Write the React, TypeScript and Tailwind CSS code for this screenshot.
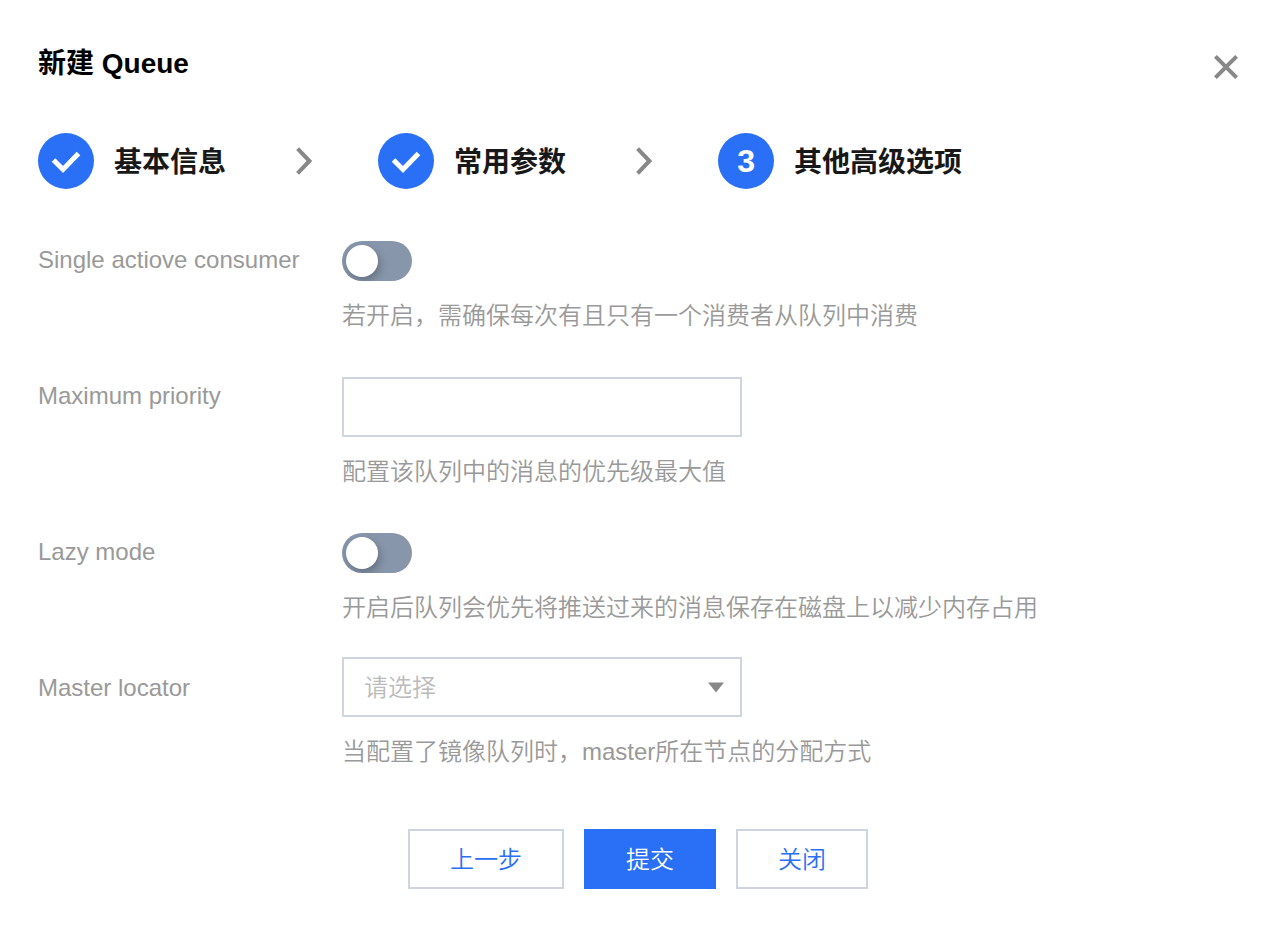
import type { ReactNode } from "react";

const steps = ["基本信息", "常用参数", "其他高级选项"];
const currentStep = 2;

const App = () => {
  return (
    <main className="pt-11 pb-12 pl-[38px] pr-11 bg-white font-['Liberation_Sans','Noto_Sans_CJK_SC',sans-serif] text-2xl text-[#999]">
      <header className="flex items-start justify-between">
        <h1 className="text-[28px] leading-10 font-bold text-black">
          新建 Queue
        </h1>
        <button type="button" aria-label="Close" className="mt-[11px]">
          <svg
            className="size-6"
            viewBox="0 0 24 24"
            stroke="#888"
            strokeWidth="4"
          >
            <path d="M1.4 1.4 22.6 22.6M22.6 1.4 1.4 22.6" />
          </svg>
        </button>
      </header>

      <ol className="flex items-center mt-[49px] mb-[52px]">
        {steps.map((title, index) => (
          <Step
            key={title}
            index={index}
            title={title}
            last={index === steps.length - 1}
          />
        ))}
      </ol>

      <form onSubmit={(e) => e.preventDefault()}>
        <div className="mb-[42px]">
          <Field
            id="single-active"
            label="Single actiove consumer"
            help="若开启，需确保每次有且只有一个消费者从队列中消费"
          >
            <Switch id="single-active" />
          </Field>
        </div>

        <div className="mb-[42px]">
          <Field
            id="max-priority"
            label="Maximum priority"
            help="配置该队列中的消息的优先级最大值"
          >
            <input
              id="max-priority"
              type="text"
              className="block w-[400px] h-[60px] px-5 border-2 border-[#cfd5de] text-black outline-none"
            />
          </Field>
        </div>

        <div className="mb-[30px]">
          <Field
            id="lazy-mode"
            label="Lazy mode"
            help="开启后队列会优先将推送过来的消息保存在磁盘上以减少内存占用"
          >
            <Switch id="lazy-mode" />
          </Field>
        </div>

        <Field
          id="master-locator"
          label="Master locator"
          labelClassName="pt-3"
          help="当配置了镜像队列时，master所在节点的分配方式"
        >
          <div className="relative w-[400px]">
            <select
              id="master-locator"
              defaultValue=""
              className="block appearance-none w-full h-[60px] px-5 pt-0.5 border-2 border-[#cfd5de] bg-white font-[350] text-[#bbb] outline-none"
            >
              <option value="">请选择</option>
              <option value="min-masters">min-masters</option>
              <option value="client-local">client-local</option>
              <option value="random">random</option>
            </select>
            <svg
              className="absolute right-[18px] top-[25px] w-4 h-[11px] pointer-events-none"
              viewBox="0 0 16 11"
              fill="#888"
            >
              <path d="M0 .5h16L8 10.5z" />
            </svg>
          </div>
        </Field>

        <div className="flex justify-center gap-5 mt-[58px]">
          <button
            type="button"
            className="h-[60px] px-10 pt-0.5 border-2 border-[#cfd5de] font-[350] text-[#2970f6]"
          >
            上一步
          </button>
          <button
            type="submit"
            className="h-[60px] px-10 pt-0.5 border-2 border-[#2970f6] bg-[#2970f6] font-[350] text-white"
          >
            提交
          </button>
          <button
            type="button"
            className="h-[60px] px-10 pt-0.5 border-2 border-[#cfd5de] font-[350] text-[#2970f6]"
          >
            关闭
          </button>
        </div>
      </form>
    </main>
  );
};

type StepProps = { index: number; title: string; last: boolean };

const Step = ({ index, title, last }: StepProps) => (
  <li className="flex items-center text-[28px] leading-10 font-bold">
    <span className="flex items-center justify-center size-14 mr-5 rounded-full bg-[#2970f6] text-[32px] text-white">
      {index < currentStep ? (
        <svg
          className="size-8"
          viewBox="0 0 32 32"
          fill="none"
          stroke="#fff"
          strokeWidth="5"
        >
          <path d="M3.5 15 13 24.5 28.5 8.5" />
        </svg>
      ) : (
        index + 1
      )}
    </span>
    <span className="pt-1 text-[#181818]">{title}</span>
    {!last && (
      <svg
        className="w-4 h-7 ml-[70px] mr-[66px]"
        viewBox="0 0 16 28"
        fill="none"
        stroke="#888"
        strokeWidth="4"
      >
        <path d="M1.6 1.6 13.4 14 1.6 26.4" />
      </svg>
    )}
  </li>
);

type FieldProps = {
  id: string;
  label: string;
  help: string;
  labelClassName?: string;
  children: ReactNode;
};

const Field = ({ id, label, help, labelClassName, children }: FieldProps) => (
  <div className="flex items-start">
    <div className={`w-[304px] shrink-0 leading-[38px] ${labelClassName || ""}`}>
      <label htmlFor={id}>{label}</label>
    </div>
    <div className="flex-1">
      {children}
      <p className="mt-4 leading-[38px] font-[350]">{help}</p>
    </div>
  </div>
);

const Switch = ({ id }: { id: string }) => (
  <input
    id={id}
    type="checkbox"
    role="switch"
    className="block appearance-none w-[70px] h-10 p-1 rounded-full overflow-hidden bg-[#8796ab] checked:bg-[#2970f6] before:block before:size-8 before:rounded-full before:bg-white before:shadow-[2px_4px_8px_rgba(0,0,0,0.25)] checked:before:ml-[30px]"
  />
);

export default App;
